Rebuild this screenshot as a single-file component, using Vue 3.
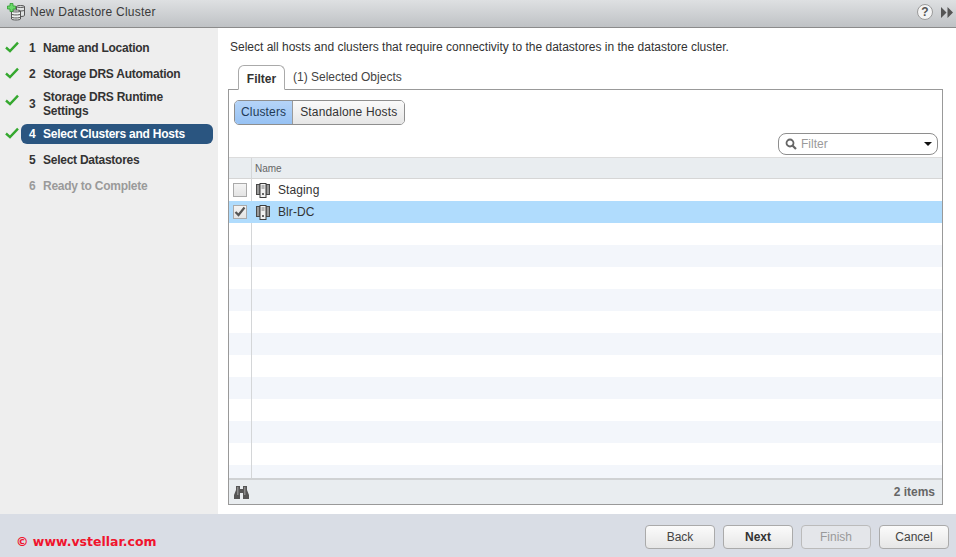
<script setup>
const steps = [
  { n: 1, label: 'Name and Location', done: true },
  { n: 2, label: 'Storage DRS Automation', done: true },
  { n: 3, label: 'Storage DRS Runtime Settings', done: true, tall: true },
  { n: 4, label: 'Select Clusters and Hosts', done: true, active: true },
  { n: 5, label: 'Select Datastores' },
  { n: 6, label: 'Ready to Complete', off: true }
]
const rows = [
  { name: 'Staging' },
  { name: 'Blr-DC', selected: true },
  ...Array.from({ length: 12 }, () => ({}))
]
</script>

<template>
  <div class="wizard">
    <header class="titlebar">
      <svg class="logo" width="20" height="18" viewBox="0 0 20 18">
        <g fill="#dfe2e2" stroke="#555" stroke-width="1">
          <path d="M10.5 3.5c0-1.300 8-1.300 8 0v9c0 1.300-8 1.300-8 0z" />
          <path d="M10.500 3.500c0 1.300 8 1.300 8 0M10.500 7c0 1.300 8 1.300 8 0" fill="none" />
          <path d="M5.500 8c0-1.300 9-1.300 9 0v8c0 1.300-9 1.300-9 0z" fill="#eef0f0" />
          <path d="M5.500 8c0 1.300 9 1.300 9 0M5.500 11c0 1.300 9 1.300 9 0M5.500 14c0 1.300 9 1.300 9 0" fill="none" />
        </g>
        <path d="M4 .5h3v2.500h2.500v3H7v2.500H4V6H1.500V3H4z" fill="#6bd96b" stroke="#2f9a2f" stroke-width=".8" />
      </svg>
      <span class="title">New Datastore Cluster</span>
      <span class="help">?</span>
      <svg class="forward" width="12" height="11" viewBox="0 0 12 11">
        <path d="M0 0l5.500 5.500L0 11zM6.500 0l5.500 5.500L6.500 11z" fill="#555" />
      </svg>
    </header>

    <div class="middle">
      <nav class="steps">
        <div v-for="s in steps" :key="s.n" class="step" :class="{ tall: s.tall }">
          <svg v-if="s.done" class="check" width="14" height="12" viewBox="0 0 14 12">
            <path d="M1 6.500l4 3.600L13 1.600" fill="none" stroke="#35a82f" stroke-width="2.400" />
          </svg>
          <div class="step-body" :class="{ active: s.active, off: s.off }">
            <span class="num">{{ s.n }}</span>
            <span class="lbl">{{ s.label }}</span>
          </div>
        </div>
      </nav>

      <main class="content">
        <p class="intro">Select all hosts and clusters that require connectivity to the datastores in the datastore cluster.</p>
        <div class="tabs">
          <div class="tab current">Filter</div>
          <div class="tab">(1) Selected Objects</div>
        </div>
        <section class="panel">
          <div class="segments">
            <div class="seg on">Clusters</div>
            <div class="seg wide">Standalone Hosts</div>
          </div>
          <div class="filter-row">
            <div class="filter">
              <svg width="12" height="12" viewBox="0 0 12 12">
                <circle cx="5" cy="5" r="3.500" fill="none" stroke="#666" stroke-width="1.800" />
                <path d="M7.500 7.500l3.500 3.500" stroke="#666" stroke-width="2.200" />
              </svg>
              <span class="ph">Filter</span>
              <span class="caret"></span>
            </div>
          </div>
          <div class="grid-head">
            <div class="cell-check"></div>
            <div class="cell-name">Name</div>
          </div>
          <div class="grid-body">
            <div v-for="(r, i) in rows" :key="i" class="row" :class="{ selected: r.selected }">
              <div class="cell-check">
                <span v-if="r.name" class="box">
                  <svg v-if="r.selected" width="12" height="12" viewBox="0 0 12 12">
                    <path d="M1.500 6l3 3L10.500 1.500" fill="none" stroke="#555" stroke-width="2.200" />
                  </svg>
                </span>
              </div>
              <div class="cell-body">
                <svg class="cluster" v-if="r.name" width="14" height="15" viewBox="0 0 14 15">
                  <rect x=".5" y="1.500" width="3.500" height="10" fill="#9a9a9a" stroke="#4a4a4a" />
                  <rect x="10" y="1.500" width="3.500" height="10" fill="#9a9a9a" stroke="#4a4a4a" />
                  <rect x="4" y=".5" width="6" height="14" fill="#f1f1f1" stroke="#3d3d3d" />
                  <path d="M5.500 3h3M5.500 5h3" stroke="#777" />
                  <rect x="6" y="10" width="2" height="2" fill="#666" />
                </svg>
                <span v-if="r.name" class="name">{{ r.name }}</span>
              </div>
            </div>
          </div>
          <div class="grid-foot">
            <svg width="15" height="14" viewBox="0 0 15 14">
              <path d="M2 1h4v3h3V1h4v4l2 5v4H9V8H6v6H0v-4l2-5z" fill="#555" />
              <path d="M3 2h1.500v8H3zM10 2h1.500v8H10z" fill="#8a8a8a" />
            </svg>
            <span class="count">2 items</span>
          </div>
        </section>
      </main>
    </div>

    <footer class="actions">
      <span class="copy">© www.vstellar.com</span>
      <div class="buttons">
        <button class="btn">Back</button>
        <button class="btn primary">Next</button>
        <button class="btn disabled">Finish</button>
        <button class="btn">Cancel</button>
      </div>
    </footer>
  </div>
</template>

<style>
html, body { margin: 0; overflow: hidden; }
</style>

<style scoped>
.wizard {
  width: 956px;
  height: 557px;
  display: flex;
  flex-direction: column;
  background: #fff;
  font-family: "Liberation Sans", Arial, sans-serif;
  font-size: 12px;
  color: #333;
  overflow: hidden;
}
.titlebar {
  height: 24px;
  flex: none;
  box-sizing: content-box;
  display: flex;
  align-items: center;
  padding: 0 3px 3px 6px;
  background: linear-gradient(#dee0e2, #bfc2c5);
  border-bottom: 1px solid #8b8b8b;
}
.logo { margin-right: 4px; }
.title { font-size: 12px; color: #3a3a3a; flex: 1; letter-spacing: .02em; }
.help {
  width: 14px;
  height: 14px;
  border: 1px solid #9a9a9a;
  border-radius: 50%;
  background: #f4f4f4;
  text-align: center;
  font-size: 12px;
  font-weight: bold;
  line-height: 14px;
  color: #555;
  margin-right: 8px;
}
.middle { flex: 1; display: flex; min-height: 0; }
.steps {
  width: 218px;
  flex: none;
  box-sizing: border-box;
  background: #eeeeee;
  padding-top: 7px;
}
.step {
  position: relative;
  height: 26px;
  display: flex;
  align-items: center;
  padding-left: 21px;
}
.step.tall { height: 34px; }
.check { position: absolute; left: 5px; top: 50%; margin-top: -7px; }
.step.tall .check { margin-top: -10px; }
.step-body {
  width: 192px;
  min-height: 20px;
  box-sizing: border-box;
  border-radius: 6px;
  padding: 0 8px;
  display: flex;
  align-items: center;
  font-weight: bold;
  color: #333;
  line-height: 14px;
}
.step-body.active { background: #2a5580; color: #fff; }
.step-body.off { color: #9a9a9a; }
.num { width: 14px; flex: none; }
.lbl { flex: 1; letter-spacing: -.25px; }
.content { flex: 1; min-width: 0; padding: 12px 13px 9px 12px; display: flex; flex-direction: column; }
.intro { margin: 0; height: 14px; line-height: 14px; color: #333; padding-bottom: 11px; }
.tabs { display: flex; height: 25px; padding-left: 8px; margin-bottom: -1px; position: relative; z-index: 1; }
.tab { padding: 5px 8px 0; line-height: 15px; color: #444; }
.tab.current {
  border: 1px solid #aaa;
  border-bottom: 1px solid #fff;
  border-radius: 6px 6px 0 0;
  font-weight: bold;
  box-sizing: border-box;
  color: #333;
  width: 47px;
  text-align: center;
  padding: 6px 0 0;
}
.panel {
  flex: 1;
  min-height: 0;
  display: flex;
  flex-direction: column;
  border: 1px solid #999;
  margin-left: -2px;
}
.segments {
  display: flex;
  align-self: flex-start;
  margin: 10px 0 0 5px;
  height: 25px;
  box-sizing: border-box;
  border: 1px solid #8e8e8e;
  border-radius: 5px;
  overflow: hidden;
  line-height: 23px;
}
.seg { padding: 0 6px; background: linear-gradient(#fafafa, #e6e6e6); color: #333; letter-spacing: .15px; }
.seg.wide { padding: 0 7px; }
.seg.on { background: linear-gradient(#b5d4f8, #97c2f4); border-right: 1px solid #9a9a9a; color: #1f3a56; }
.filter-row { display: flex; justify-content: flex-end; padding: 8px 4px 2px 0; }
.filter {
  width: 160px;
  height: 22px;
  box-sizing: border-box;
  border: 1px solid #8e8e8e;
  border-radius: 8px;
  display: flex;
  align-items: center;
  padding: 0 5px 0 6px;
  background: #fff;
}
.ph { color: #9a9a9a; margin-left: 4px; flex: 1; }
.caret { width: 0; height: 0; border: 4px solid transparent; border-top: 4px solid #111; border-bottom: 0; }
.grid-head {
  display: flex;
  height: 22px;
  flex: none;
  box-sizing: border-box;
  background: #e9edf0;
  border-top: 1px solid #dcdcdc;
  border-bottom: 1px solid #d6d6d6;
  font-size: 10px;
  color: #666;
}
.cell-check { width: 23px; flex: none; box-sizing: border-box; border-right: 1px solid #d4d6d8; display: flex; align-items: center; justify-content: center; }
.cell-name { padding-left: 3px; line-height: 21px; }
.grid-body { flex: 1; min-height: 0; overflow: hidden; }
.row { height: 22px; display: flex; }
.row:nth-child(even) { background: #f3f6fb; }
.row:nth-child(1), .row:nth-child(2) { background: #fff; }
.row.selected, .row.selected:nth-child(2) { background: #b0dcfd; }
.row.selected .cell-check { border-right-color: #b0dcfd; }
.box {
  width: 12px;
  height: 12px;
  display: block;
  border: 1px solid #aaa;
  background: linear-gradient(#f4f4f4, #e4e4e4);
}
.box svg { display: block; }
.cell-body { display: flex; align-items: center; padding-left: 4px; }
.cluster { margin-right: 8px; }
.name { letter-spacing: .1px; color: #333; }
.grid-foot {
  height: 26px;
  flex: none;
  box-sizing: border-box;
  border-top: 2px solid #d0d2d4;
  background: #e9edf0;
  display: flex;
  align-items: center;
  justify-content: space-between;
  padding: 0 7px 0 5px;
}
.count { font-weight: bold; color: #666; }
.actions {
  height: 43px;
  flex: none;
  display: flex;
  align-items: center;
  justify-content: space-between;
  background: #d9dde5;
  padding: 0 7px 0 16px;
}
.copy {
  font-family: "DejaVu Sans", sans-serif;
  font-weight: bold;
  font-size: 12.5px;
  color: #f0142d;
  padding-top: 12px;
}
.buttons { display: flex; gap: 8px; padding-top: 2px; }
.btn {
  width: 70px;
  height: 24px;
  padding: 0;
  box-sizing: border-box;
  border: 1px solid #aaa;
  border-radius: 4px;
  background: linear-gradient(#fbfbfb, #e6e6e6);
  font: 12px "Liberation Sans", Arial, sans-serif;
  color: #444;
}
.btn.primary { font-weight: bold; color: #333; }
.btn.disabled { color: #999; background: #e4e6ea; border-color: #bbb; }
</style>
